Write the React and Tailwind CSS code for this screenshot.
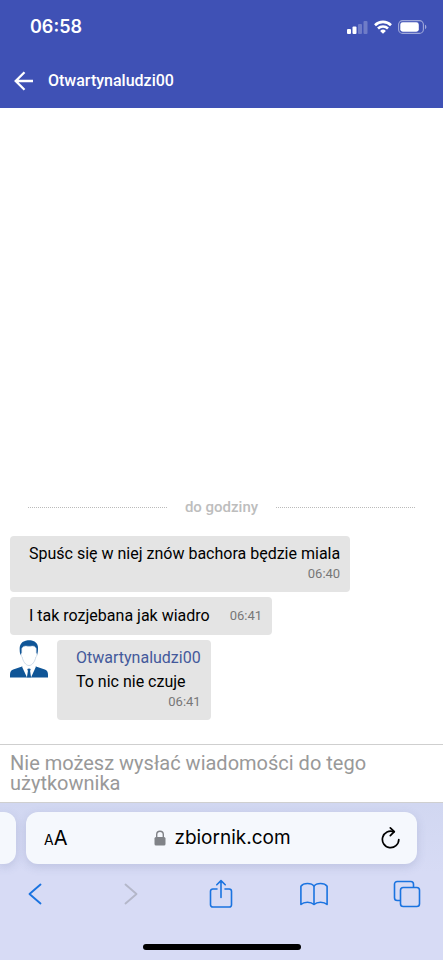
import { Fragment } from 'react';

const messages = [
  { id: 1, text: 'Spuśc się w niej znów bachora będzie miala', time: '06:40' },
  { id: 2, text: 'I tak rozjebana jak wiadro', time: '06:41', inline: true },
  { id: 3, author: 'Otwartynaludzi00', text: 'To nic nie czuje', time: '06:41' },
];

function StatusBar() {
  return (
    <div className="flex h-[54px] items-center justify-between pl-[30px] pr-4 font-['Inter',sans-serif] text-white">
      <span className="text-lg font-semibold">06:58</span>
      <div className="flex items-center gap-[6px]">
        <svg width="21" height="13" viewBox="0 0 21 13" fill="currentColor" aria-hidden="true">
          <rect x="0" y="8" width="4" height="5" rx="1" />
          <rect x="5.5" y="5.5" width="4" height="7.5" rx="1" />
          <rect x="11" y="3" width="4" height="10" rx="1" opacity="0.25" />
          <rect x="16.5" y="0" width="4" height="13" rx="1" opacity="0.25" />
        </svg>
        <svg width="18" height="14" viewBox="0 0 18 14" fill="none" stroke="currentColor" strokeWidth="2.6" aria-hidden="true">
          <path d="M1 5.2a11.4 11.4 0 0 1 16 0" />
          <path d="M4 8.5a7.1 7.1 0 0 1 10 0" />
          <path d="M9 13.8 6.1 10.9a4.1 4.1 0 0 1 5.8 0Z" fill="currentColor" stroke="none" />
        </svg>
        <svg width="29" height="14" viewBox="0 0 29 14" aria-hidden="true">
          <rect x="0.6" y="0.6" width="24.8" height="12.8" rx="4" fill="none" stroke="currentColor" strokeWidth="1.1" opacity="0.5" />
          <rect x="2.3" y="2.3" width="18.5" height="9.4" rx="2.4" fill="currentColor" />
          <path d="M27 4.8c1.8.6 1.8 3.8 0 4.4Z" fill="currentColor" opacity="0.5" />
        </svg>
      </div>
    </div>
  );
}

function Avatar() {
  return (
    <svg width="38" height="38" viewBox="0 0 38 38" className="shrink-0" aria-hidden="true">
      <path d="M0 37.500v-2.500c0-3 .8-4.800 3.200-5.600L12 26.500h14l8.800 2.900c2.400.8 3.200 2.600 3.200 5.600v2.500Z" fill="#0f5597" />
      <path d="M13.200 24 12.200 27 17 37.500h4L25.800 27 24.800 24Z" fill="#fff" />
      <path d="m17.300 29 1.700-.6 1.700.6-.6 2 1 6.500h-4.200l1-6.500Z" fill="#0f5597" />
      <path d="M10.200 14.500C8.800 7 10 2.300 15 .9c3-1.300 12-1.200 12.900 5.600.3 2.700 0 5.200-.6 8Z" fill="#0f5597" />
      <path d="M11.700 8.500C13 6.300 14.500 5.800 16.200 6c2 .4 3.800.4 5.800 0 1.800-.3 3.200.3 4.300 2.500v4.500c1.100 0 .9 3.200-.4 3.800-.9 4.600-3.600 8.700-6.900 8.700s-6-4.100-6.900-8.700c-1.300-.6-1.500-3.800-.4-3.800Z" fill="#fff" stroke="#9fb6d0" strokeWidth="0.500" />
    </svg>
  );
}

function Bubble({ message }) {
  if (message.inline) {
    return (
      <div className="flex items-center gap-5 rounded-[4px] bg-[#e4e4e4] py-[7px] pl-[19px] pr-[10px]">
        <p>{message.text}</p>
        <time className="text-[13px] text-[#777]">{message.time}</time>
      </div>
    );
  }
  return (
    <div className="rounded-[4px] bg-[#e4e4e4] pt-[6px] pr-[10px] pb-[10px] pl-[19px]">
      {message.author && <p className="text-[#43599b]">{message.author}</p>}
      <p>{message.text}</p>
      <time className="block text-right text-[13px] leading-4 text-[#777]">{message.time}</time>
    </div>
  );
}

function BrowserBar() {
  return (
    <footer className="bg-[#d7dbf5] text-[#1a73e0]">
      <div className="flex h-[70px] items-start gap-[10px] bg-linear-to-b from-[#d1d7f1] to-[#d7dbf5] pt-[9px] pr-[26px]">
        <div className="h-[52px] w-4 rounded-r-xl bg-[#f5f8fd] shadow-[0_3px_10px_rgba(90,100,150,0.2)]" />
        <div className="flex h-[52px] flex-1 items-center justify-between rounded-xl bg-[#f5f8fd] pr-4 pl-[18px] text-black shadow-[0_3px_10px_rgba(90,100,150,0.2)]">
          <button type="button" aria-label="Rozmiar tekstu" className="flex w-7 items-baseline font-['Inter',sans-serif]">
            <span className="text-sm">A</span>
            <span className="text-xl">A</span>
          </button>
          <div className="flex items-center gap-2">
            <svg width="12" height="16" viewBox="0 0 12 16" aria-hidden="true">
              <path d="M2.700 8V4.600a3.300 3.300 0 0 1 6.600 0V8" fill="none" stroke="#808388" strokeWidth="1.400" />
              <rect x="0.500" y="7" width="11" height="8.500" rx="1.500" fill="#808388" />
            </svg>
            <span className="font-['Inter',sans-serif] text-[19px]">zbiornik.com</span>
          </div>
          <button type="button" aria-label="Odśwież" className="flex w-7 justify-end">
            <svg width="20" height="24" viewBox="0 0 20 24" fill="none" stroke="currentColor" strokeWidth="1.700" strokeLinecap="round" strokeLinejoin="round">
              <path d="M17.800 13.500A8.200 8.200 0 1 1 12.800 5.900" />
              <path d="M9.300 1.800 13.300 5.700 9.300 9.700" />
            </svg>
          </button>
        </div>
      </div>

      <nav className="flex h-[42px] items-center justify-between pl-[21px] pr-[22px]">
        <button type="button" aria-label="Wstecz" className="flex w-7 justify-center">
          <svg width="14" height="24" viewBox="0 0 14 24" fill="none" stroke="currentColor" strokeWidth="1.900" strokeLinecap="round" strokeLinejoin="round">
            <path d="M12.500 2.500 1.500 12l11 9.500" />
          </svg>
        </button>
        <button type="button" aria-label="Dalej" disabled className="flex w-7 justify-end text-[#b4b7c9]">
          <svg width="24" height="24" viewBox="0 0 24 24" fill="none" stroke="currentColor" strokeWidth="1.900" strokeLinecap="round" strokeLinejoin="round">
            <path d="M7.500 2.500 18.500 12 7.500 21.500" />
          </svg>
        </button>
        <button type="button" aria-label="Udostępnij" className="flex w-7 justify-center">
          <svg width="24" height="30" viewBox="0 0 24 30" fill="none" stroke="currentColor" strokeWidth="1.600" strokeLinecap="round" strokeLinejoin="round">
            <path d="M8 10H3.800A2.300 2.300 0 0 0 1.500 12.300v13.400A2.300 2.300 0 0 0 3.800 28h16.400a2.300 2.300 0 0 0 2.300-2.300V12.300A2.300 2.300 0 0 0 20.200 10H16" />
            <path d="M12 18.500V1.800M7.800 5.800 12 1.600l4.200 4.200" />
          </svg>
        </button>
        <button type="button" aria-label="Zakładki" className="flex w-7 justify-center">
          <svg width="28" height="24" viewBox="0 0 28 24" fill="none" stroke="currentColor" strokeWidth="1.600" strokeLinejoin="round">
            <path d="M14 4.200C11.500.600 3.500.600.900 4.200v18.300c3.100-3.100 10-3.100 13.100 0 3.100-3.100 10-3.100 13.100 0V4.200C24.500.600 16.500.600 14 4.200Z" />
            <path d="M14 4.200v18.300" />
          </svg>
        </button>
        <button type="button" aria-label="Karty" className="flex w-7 justify-center">
          <svg width="28" height="28" viewBox="0 0 28 28" fill="none" stroke="currentColor" strokeWidth="1.600">
            <path d="M7.500 20.500H4.200A2.700 2.700 0 0 1 1.500 17.800V4.200A2.700 2.700 0 0 1 4.200 1.500h13.600a2.700 2.700 0 0 1 2.700 2.700v3.300" />
            <rect x="7.500" y="7.500" width="19" height="19" rx="2.700" />
          </svg>
        </button>
      </nav>

      <div className="flex h-[45px] items-end justify-center pb-[10px]">
        <div className="h-[6px] w-[158px] rounded-full bg-black" />
      </div>
    </footer>
  );
}

export default function App() {
  return (
    <div className="flex min-h-screen flex-col bg-white font-['Roboto',sans-serif]">
      <header className="bg-[#3f51b5] text-white">
        <StatusBar />
        <div className="flex h-[54px] items-center gap-[14px] pl-[14px]">
          <button type="button" aria-label="Wróć">
            <svg width="20" height="20" viewBox="0 0 20 20" fill="none" stroke="currentColor" strokeWidth="2.300">
              <path d="M19 10H2M10.500 1.200 1.700 10l8.800 8.800" />
            </svg>
          </button>
          <h1 className="text-base font-medium">Otwartynaludzi00</h1>
        </div>
      </header>

      <main className="flex flex-1 flex-col justify-end px-[10px] pb-6 text-base leading-6 text-black">
        <div className="mb-[17px] flex items-center gap-[18px] px-[18px] text-[15px] font-medium text-[#bdbdbd]">
          <span className="flex-1 border-t border-dotted border-[#bbb]" />
          <span>do godziny</span>
          <span className="flex-1 border-t border-dotted border-[#bbb]" />
        </div>
        <div className="flex flex-col items-start gap-[5px]">
          {messages.map((message) => (
            <Fragment key={message.id}>
              {message.author ? (
                <div className="flex items-start gap-[9px]">
                  <Avatar />
                  <Bubble message={message} />
                </div>
              ) : (
                <Bubble message={message} />
              )}
            </Fragment>
          ))}
        </div>
      </main>

      <div className="border-y border-[#cfcfcf] bg-white px-[10px] pt-2 pb-[9px]">
        <textarea
          rows={2}
          disabled
          aria-label="Wiadomość"
          placeholder="Nie możesz wysłać wiadomości do tego użytkownika"
          className="block w-full resize-none overflow-hidden text-xl leading-5 placeholder:text-[#999]"
        />
      </div>

      <BrowserBar />
    </div>
  );
}
